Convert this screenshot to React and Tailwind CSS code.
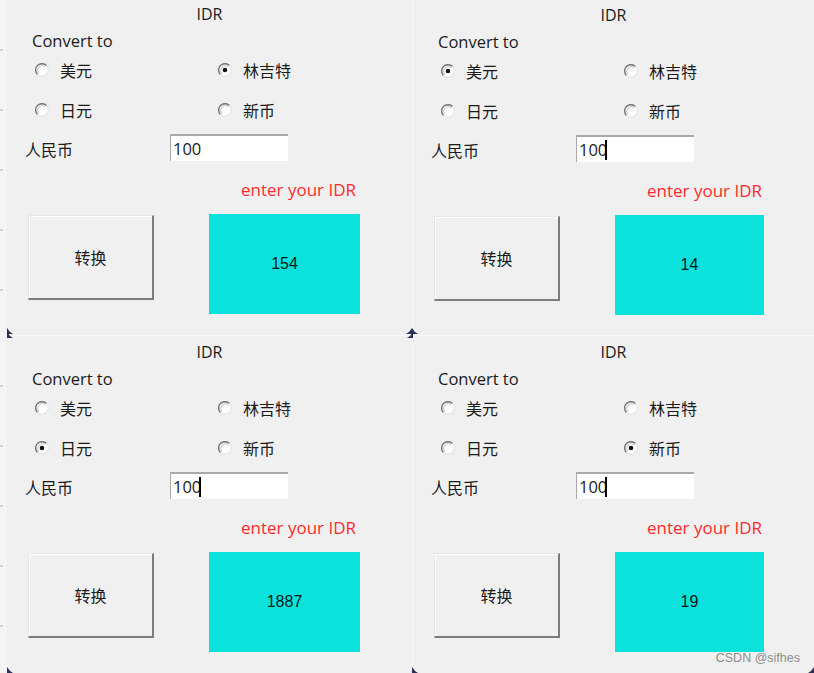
import React from "react";

const SANS = { fontFamily: '"Open Sans", "Noto Sans CJK SC", sans-serif' };
const CJK = { fontFamily: '"Noto Sans CJK SC", "Open Sans", sans-serif' };

function Radio({ checked }) {
  return (
    <svg width="14" height="14" viewBox="0 0 14 14" className="shrink-0">
      <circle cx="7" cy="7" r="6.3" fill="#ffffff" />
      <path d="M2.5 11.5 A6.3 6.3 0 0 1 11.5 2.5" fill="none" stroke="#7a7a7a" strokeWidth="1.5" />
      <path d="M11.5 2.5 A6.3 6.3 0 0 1 2.5 11.5" fill="none" stroke="#e4e4e4" strokeWidth="1.2" />
      <path d="M3.7 10.3 A4.7 4.7 0 0 1 10.3 3.7" fill="none" stroke="#c4c4c4" strokeWidth="1" />
      {checked && <circle cx="7" cy="7" r="2.3" fill="#111111" />}
    </svg>
  );
}

function RadioItem({ label, checked, className }) {
  return (
    <div className={"flex items-center gap-[11px] " + className}>
      <Radio checked={checked} />
      <span className="text-[16px] leading-[20px] text-[#1b1b1b]" style={CJK}>
        {label}
      </span>
    </div>
  );
}

function Panel({ selected, result, caret, padClass, cyanClass }) {
  return (
    <div className={"flex-1 flex flex-col " + padClass}>
      <div className="text-center text-[16px] leading-[20px] text-[#1b1b1b]" style={SANS}>
        IDR
      </div>
      <div className="mt-[7px] pl-[25px] text-[16.5px] leading-[20px] text-[#1b1b1b]" style={SANS}>
        Convert to
      </div>
      <div className="mt-[9px] flex pl-[28px]">
        <RadioItem label="美元" checked={selected === 0} className="w-[183px]" />
        <RadioItem label="林吉特" checked={selected === 1} className="" />
      </div>
      <div className="mt-[20px] flex pl-[28px]">
        <RadioItem label="日元" checked={selected === 2} className="w-[183px]" />
        <RadioItem label="新币" checked={selected === 3} className="" />
      </div>
      <div className="mt-[14px] flex items-center pl-[18px]">
        <span className="w-[145px] text-[16px] leading-[20px] text-[#1b1b1b] pt-[2px]" style={CJK}>
          人民币
        </span>
        <div className="w-[118px] h-[27px] bg-white border-t-2 border-l border-[#a9a9a9] flex items-center pl-[2px]">
          <span className="text-[16.5px] leading-[20px] text-[#1b1b1b]" style={SANS}>
            100
          </span>
          {caret && <span className="w-[2px] h-[20px] bg-black -ml-[2px]" />}
        </div>
      </div>
      <div className="mt-[19px] pl-[234px] text-[17px] leading-[20px] text-[#ff2b2b]" style={SANS}>
        enter your IDR
      </div>
      <div className="mt-[15px] flex items-start pl-[21px]">
        <div className="w-[126px] h-[85px] bg-[#f0f0f0] border-t border-l border-[#e6e6e6] border-r-2 border-b-2 border-r-[#7c7c7c] border-b-[#7c7c7c] shadow-[inset_1px_1px_0_#ffffff] flex items-center justify-center">
          <span className="text-[16px] leading-[20px] text-[#1b1b1b]" style={CJK}>
            转换
          </span>
        </div>
        <div className={"ml-[55px] -mt-[1px] h-[100px] bg-[#0be2dc] flex items-center justify-center " + cyanClass}>
          <span className="text-[16px] leading-[20px] text-[#0a1a1a]" style={{ fontFamily: '"Liberation Sans", Arial, sans-serif' }}>
            {result}
          </span>
        </div>
      </div>
    </div>
  );
}

function Strip() {
  return (
    <div className="w-[7px] bg-[#f4f4f6] flex flex-col items-start gap-[58px] pt-[49px]">
      {[0, 1, 2, 3, 4].map((i) => (
        <span key={i} className="w-[3px] h-[2px] bg-[#c8c8cc] rounded-full" />
      ))}
    </div>
  );
}

function Corner({ className, flip }) {
  return (
    <svg width="6" height="6" viewBox="0 0 6 6" className={"absolute " + className}>
      <path d={flip ? "M6 6 L6 0 L3 4 L0 6 Z" : "M0 6 L0 0 L3 4 L6 6 Z"} fill="#2a2f55" />
    </svg>
  );
}

export default function App() {
  return (
    <div className="relative w-[814px] h-[673px] bg-[#f0f0f0] flex flex-col overflow-hidden">
      <div className="h-[335px] flex">
        <div className="w-[412px] flex">
          <Strip />
          <Panel selected={1} result="154" caret={false} padClass="pt-[4px]" cyanClass="w-[151px]" />
        </div>
        <div className="flex-1 flex border-l border-[#f8f8f8]">
          <Panel selected={0} result="14" caret={true} padClass="pt-[5px]" cyanClass="w-[149px]" />
        </div>
      </div>
      <div className="h-px bg-[#f9f9f9]" />
      <div className="flex-1 flex">
        <div className="w-[412px] flex">
          <Strip />
          <Panel selected={2} result="1887" caret={true} padClass="pt-[6px]" cyanClass="w-[151px]" />
        </div>
        <div className="flex-1 flex border-l border-[#f8f8f8]">
          <Panel selected={3} result="19" caret={true} padClass="pt-[6px]" cyanClass="w-[149px]" />
        </div>
      </div>

      <Corner className="left-[7px] top-[328px]" />
      <Corner className="left-[406px] top-[328px]" flip />
      <Corner className="left-[412px] top-[328px]" />
      <Corner className="left-[7px] top-[332px]" />
      <Corner className="left-[407px] top-[332px]" flip />
      <Corner className="left-[7px] top-[667px]" />
      <Corner className="left-[412px] top-[667px]" />
      <Corner className="left-[808px] top-[667px]" flip />

      <div
        className="absolute right-[14px] bottom-[7px] text-[12.5px] leading-[16px] text-[#8e8e8e]"
        style={{ fontFamily: '"Liberation Sans", Arial, sans-serif' }}
      >
        CSDN @sifhes
      </div>
    </div>
  );
}
